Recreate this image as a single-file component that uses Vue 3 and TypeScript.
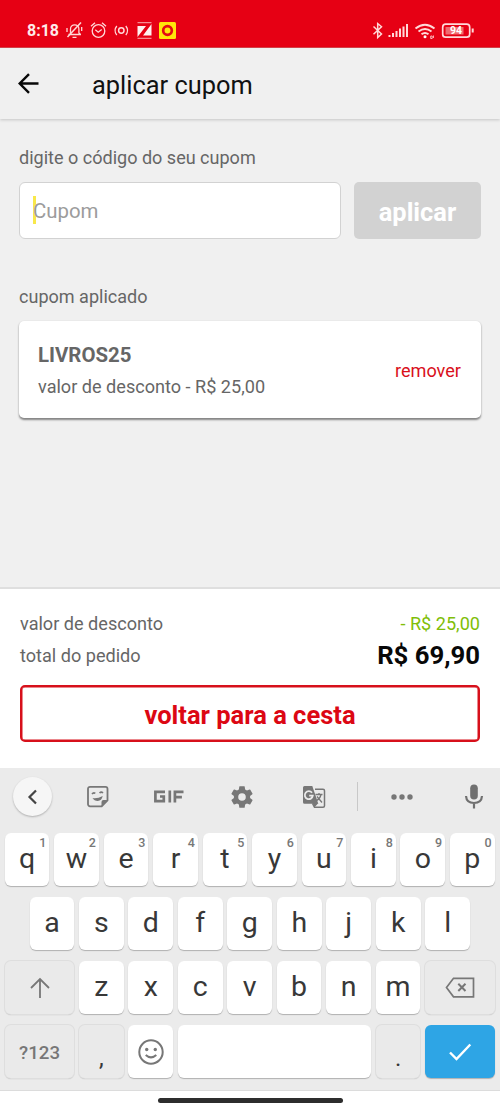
<script setup lang="ts">
interface LetterKey {
  label: string
  hint?: string
}

const topRow: LetterKey[] = 'qwertyuiop'.split('').map((label, i) => ({
  label,
  hint: String((i + 1) % 10),
}))
const middleRow: string[] = 'asdfghjkl'.split('')
const bottomRow: string[] = 'zxcvbnm'.split('')
</script>

<template>
  <div class="screen">
    <div class="status">
      <span class="clock">8:18</span>
      <svg class="status-left" width="120" height="20" viewBox="0 0 120 20" fill="none" stroke="#ffd9d9" stroke-width="1.3">
        <path d="M4.500 14.500h12.500M6.500 14V9a4.200 4.200 0 0 1 8.400 0v4l1.800 1.500M8.500 17.300h4M3 8v4M17.700 7v4" />
        <path d="M3.500 17 17 2.500" stroke-width="1.500" />
        <circle cx="34.500" cy="11" r="6.300" />
        <path d="M31.300 9.800l2.900 2.400 3.500-2.700M27 6.200l4-3.500M38 2.700l4 3.500" />
        <circle cx="57.300" cy="10.500" r="2.700" stroke-width="1.500" />
        <path d="M52.800 6q-3.500 4.500 0 9M61.800 6q3.500 4.500 0 9" />
        <path d="M73.500 2.700h14M73.500 18.300h14" stroke-width=".8" />
        <path d="M73.500 6h8.500l-8.500 11zM87.500 4v11.500H79z" fill="#fff0f0" stroke="none" />
        <rect x="95" y="2" width="17" height="17" rx="1.500" fill="#ffe60a" stroke="none" />
        <circle cx="103.500" cy="10.500" r="4.300" stroke="#e30b13" stroke-width="2.700" />
      </svg>
      <svg class="status-right" width="104" height="20" viewBox="0 0 104 20" fill="none" stroke="#ffd9d9" stroke-width="1.500">
        <path d="M2.500 6.500l8 7.500-3.800 3.500V3.500l3.800 3.200-8 7.500" />
        <path d="M18.500 17v-2M22 17v-4M25.500 17V11M29 17V8.500M32.500 17V6.500M36 17V4" stroke-width="2" />
        <path d="M44.500 8.500q9.500-7.500 19 0M47.500 11.500q6.500-5 13 0M50.500 14.300q3.500-2.700 7 0" stroke-width="1.900" />
        <circle cx="54" cy="16.700" r="1.500" fill="#fff" stroke="none" />
        <path d="M59.700 16h1.500v2.500h-1.500zM62.500 15.500v2.500" stroke-width=".8" />
        <rect x="71.700" y="4.200" width="27" height="13" rx="3" stroke-width="1.700" />
        <rect x="74.500" y="7" width="18" height="7.500" fill="#f06a70" stroke="none" />
        <path d="M101.700 8.500v4" stroke-width="2" />
        <text x="85" y="14.300" text-anchor="middle" class="battery">94</text>
      </svg>
    </div>

    <header class="appbar">
      <svg width="24" height="24" viewBox="0 0 24 24" fill="none" stroke="#080808" stroke-width="2.400">
        <path d="M22.500 11.500H4M13 2.200 3.700 11.500l9.300 9.300" />
      </svg>
      <h1>aplicar cupom</h1>
    </header>

    <main>
      <p class="label">digite o código do seu cupom</p>
      <div class="form">
        <div class="field"><span class="caret"></span><span class="placeholder">Cupom</span></div>
        <button class="apply">aplicar</button>
      </div>
      <p class="label applied">cupom aplicado</p>
      <section class="coupon">
        <div>
          <strong>LIVROS25</strong>
          <p>valor de desconto - R$ 25,00</p>
        </div>
        <a>remover</a>
      </section>
    </main>

    <section class="summary">
      <div class="line"><span>valor de desconto</span><span class="discount">- R$ 25,00</span></div>
      <div class="line"><span>total do pedido</span><span class="total">R$ 69,90</span></div>
      <button class="back">voltar para a cesta</button>
    </section>

    <section class="keyboard">
      <div class="tools">
        <div class="tool t-back">
          <span class="round">
            <svg width="20" height="20" viewBox="0 0 20 20" fill="none" stroke="#444" stroke-width="2.200"><path d="m13 3.500-6.500 6.500 6.500 6.500" /></svg>
          </span>
        </div>
        <div class="tool t-sticker">
          <svg width="24" height="24" viewBox="0 0 24 24" fill="none" stroke="#777" stroke-width="1.800">
            <path d="M4 1.800h15.500a2 2 0 0 1 2 2V15.500l-5.800 5.800H4a2 2 0 0 1-2-2V3.800a2 2 0 0 1 2-2z" />
            <path d="M21.500 15h-4a2 2 0 0 0-2 2v4.300z" fill="#777" stroke="none" />
            <path d="M6 9q1.500-2 3.300-.7M13.500 8q1.800-1.700 3.500 0" stroke-width="1.600" />
            <path d="M6.500 13q5 .8 10.200-2-1 4.800-5 5-3.500 0-5.200-3z" fill="#777" stroke="none" />
          </svg>
        </div>
        <div class="tool t-gif">
          <svg width="30" height="14" viewBox="0 0 30 14" fill="none" stroke="#777" stroke-width="2.700">
            <path d="M11 1.900H1.400v9.200h8.400V6.500H6M15.800.5v12M20.900 12.500V1.900h8.600M20.900 7.200h7" />
          </svg>
        </div>
        <div class="tool t-gear">
          <svg width="26" height="26" viewBox="0 0 24 24" fill="#777">
            <path d="M19.430 12.980c.04-.32.07-.64.07-.98s-.03-.66-.07-.98l2.110-1.650a.5.5 0 0 0 .12-.64l-2-3.460a.5.5 0 0 0-.61-.22l-2.490 1a7.300 7.300 0 0 0-1.690-.98l-.38-2.650A.49.490 0 0 0 14 2h-4a.49.490 0 0 0-.49.420l-.38 2.650c-.61.25-1.170.59-1.690.98l-2.490-1a.49.490 0 0 0-.61.220l-2 3.460a.5.5 0 0 0 .12.640l2.110 1.650a7.900 7.900 0 0 0 0 1.960l-2.110 1.650a.5.5 0 0 0-.12.640l2 3.460c.12.220.39.300.61.220l2.490-1c.52.400 1.080.73 1.690.98l.38 2.650c.03.240.24.420.49.420h4c.25 0 .46-.18.49-.42l.38-2.650c.61-.25 1.170-.59 1.690-.98l2.490 1c.23.090.49 0 .61-.22l2-3.460a.5.5 0 0 0-.12-.64zM12 15.500a3.500 3.500 0 1 1 0-7 3.500 3.500 0 0 1 0 7z" />
          </svg>
        </div>
        <div class="tool t-translate">
          <svg width="24" height="24" viewBox="0 0 24 24" fill="none" stroke="#777" stroke-width="1.500">
            <path d="M13 4.300h8a1.500 1.500 0 0 1 1.500 1.500v15a1.500 1.500 0 0 1-1.500 1.500h-8.500l-2-4" />
            <path d="M2.500 1h7.800l6 17.700H2.500A1.500 1.500 0 0 1 1 17.200V2.500A1.500 1.500 0 0 1 2.500 1zM11 18.500h5l-3.700 4z" fill="#777" stroke="none" />
            <path d="M10 7.700a4 4 0 1 0 .8 3H7.200" stroke="#ebebeb" stroke-width="1.800" />
            <path d="M13.500 9.500h7M17 8v1.500M19 9.500q-.8 4-5 6.500M15 11.500l5 6" stroke-width="1.300" />
          </svg>
        </div>
        <i class="divider"></i>
        <div class="tool t-more">
          <svg width="22" height="6" viewBox="0 0 22 6" fill="#777"><circle cx="3" cy="3" r="2.700" /><circle cx="11" cy="3" r="2.700" /><circle cx="19" cy="3" r="2.700" /></svg>
        </div>
        <div class="tool t-mic">
          <svg width="20" height="26" viewBox="0 0 20 26" fill="none" stroke="#707070" stroke-width="2.200">
            <rect x="6.200" y=".5" width="7.600" height="15" rx="3.800" fill="#707070" stroke="none" />
            <path d="M2 12q.5 7 8 7t8-7M10 19v5.500" />
          </svg>
        </div>
      </div>

      <div class="row">
        <div v-for="k in topRow" :key="k.label" class="key">{{ k.label }}<sup>{{ k.hint }}</sup></div>
      </div>
      <div class="row inset">
        <div v-for="k in middleRow" :key="k" class="key">{{ k }}</div>
      </div>
      <div class="row">
        <div class="key wide grey">
          <svg width="22" height="22" viewBox="0 0 22 22" fill="none" stroke="#777" stroke-width="1.800"><path d="M11 21V2M2 11l9-9 9 9" /></svg>
        </div>
        <div v-for="k in bottomRow" :key="k" class="key">{{ k }}</div>
        <div class="key wide grey">
          <svg width="30" height="22" viewBox="0 0 30 22" fill="none" stroke="#777" stroke-width="1.700"><path d="M8.500 1.300h20v18.500h-20L1.500 10.500z" /><path d="M13.300 6.800l7.200 7.200M20.500 6.800l-7.200 7.200" stroke-width="2" /></svg>
        </div>
      </div>
      <div class="row">
        <div class="key wide grey symbols">?123</div>
        <div class="key grey punct">,</div>
        <div class="key">
          <svg width="28" height="28" viewBox="0 0 28 28" fill="none" stroke="#777" stroke-width="2">
            <circle cx="14" cy="14" r="11.700" /><path d="M8.700 17q5.300 4.800 10.600 0" />
            <circle cx="9.700" cy="11.500" r="1.700" fill="#777" stroke="none" /><circle cx="18.300" cy="11.500" r="1.700" fill="#777" stroke="none" />
          </svg>
        </div>
        <div class="key space"></div>
        <div class="key grey punct">.</div>
        <div class="key wide enter">
          <svg width="24" height="20" viewBox="0 0 24 20" fill="none" stroke="#fff" stroke-width="2.400"><path d="m2 10.500 6.500 6.500L22.300 2.500" /></svg>
        </div>
      </div>
    </section>
    <div class="nav"><i></i></div>
  </div>
</template>

<style>
body {
  margin: 0;
}
</style>

<style scoped>
* {
  box-sizing: border-box;
}
.screen {
  width: 500px;
  height: 1111px;
  overflow: hidden;
  display: flex;
  flex-direction: column;
  background: #f0f0f0;
  font-family: Roboto, "Liberation Sans", sans-serif;
  color: #666;
}
p, h1 {
  margin: 0;
  font-weight: 400;
}
button {
  font-family: inherit;
  font-weight: 700;
  padding: 0;
}
.status {
  height: 48px;
  flex: none;
  background: #e60014;
  border-bottom: 1px solid #d8434c;
  display: flex;
  padding: 20px 25px 0 27px;
}
.clock {
  width: 37px;
  font-size: 16px;
  font-weight: 700;
  line-height: 22px;
  color: #ffe9e9;
}
.status-left {
  flex: none;
}
.status-right {
  margin-left: auto;
}
.battery {
  font-size: 10.5px;
  font-weight: 700;
  fill: #fff;
  stroke: none;
}
.appbar {
  height: 71px;
  flex: none;
  display: flex;
  align-items: center;
  padding: 0 16px;
  box-shadow: 0 1px 3px rgba(0, 0, 0, 0.18);
}
h1 {
  margin: 2px 0 0 52px;
  font-size: 25.4px;
  color: #111;
}
main {
  flex: 1;
  min-height: 0;
  padding: 28px 19px 0;
}
.label {
  font-size: 18.05px;
  line-height: 21px;
}
.form {
  display: flex;
  gap: 13px;
  margin-top: 14px;
}
.field {
  width: 322px;
  height: 57px;
  border: 1px solid #d2d2d2;
  border-radius: 6px;
  background: #fff;
  display: flex;
  align-items: center;
  padding: 1px 0 0 13px;
}
.caret {
  width: 3px;
  height: 28px;
  margin: -3px -3px 0 0;
  background: #f8e84a;
}
.placeholder {
  position: relative;
  font-size: 20.4px;
  color: #9c9c9c;
}
.apply {
  flex: 1;
  height: 57px;
  border: 0;
  border-radius: 5px;
  background: #d2d2d2;
  color: #fff;
  font-size: 25.4px;
  padding-top: 3px;
}
.applied {
  margin-top: 47px;
}
.coupon {
  height: 97px;
  margin-top: 14px;
  padding: 0 20px 0 19px;
  display: flex;
  justify-content: space-between;
  align-items: center;
  border-radius: 5px;
  background: #fff;
  box-shadow: 0 1.5px 2px rgba(0, 0, 0, 0.45);
  font-size: 18.1px;
}
.coupon strong {
  display: block;
  font-size: 20.4px;
  line-height: 24px;
}
.coupon p {
  line-height: 21px;
  margin-top: 9px;
}
.coupon a {
  color: #d9101b;
  margin-top: 2px;
}
.summary {
  height: 181px;
  flex: none;
  border-top: 2px solid #dfdfdf;
  background: #fff;
  padding: 18px 20px 0;
}
.line {
  display: flex;
  justify-content: space-between;
  align-items: center;
  height: 32px;
  font-size: 18.1px;
}
.discount {
  color: #80be08;
}
.total {
  color: #080808;
  font-size: 25.7px;
  font-weight: 700;
}
.back {
  display: block;
  width: 460px;
  height: 57px;
  margin-top: 14px;
  border: 2px solid #d7101b;
  box-shadow: inset 0 0 0 0.500px #d7101b;
  border-radius: 5px;
  background: #fff;
  color: #dc0713;
  font-size: 25.5px;
  padding-top: 2px;
}
.keyboard {
  height: 323px;
  flex: none;
  background: #ebebeb;
  border-bottom: 1px solid #dcdcdc;
}
.tools {
  height: 65px;
  display: flex;
  align-items: center;
  padding-bottom: 8px;
}
.tool {
  display: flex;
  align-items: center;
  justify-content: center;
}
.tool svg {
  display: block;
}
.t-back, .t-sticker { width: 65px; }
.t-gif { width: 77px; }
.t-gear { width: 70px; }
.t-translate { width: 74px; }
.t-more { width: 78px; }
.t-mic { width: 59px; padding-left: 7px; }
.round {
  width: 39px;
  height: 39px;
  border-radius: 50%;
  background: #f6f6f6;
  box-shadow: 0 1px 2px rgba(0, 0, 0, 0.25);
  display: flex;
  align-items: center;
  justify-content: center;
}
.divider {
  width: 1px;
  height: 29px;
  margin: 0 5px 0 6px;
  background: #c8c8c8;
}
.row {
  display: flex;
  gap: 4.7px;
  padding: 0 5.3px 0 4.7px;
  margin-bottom: 11px;
}
.inset {
  padding: 0 30px 0 29.500px;
}
.key {
  position: relative;
  flex: 1 1 0;
  height: 53px;
  border-radius: 6px;
  background: #fff;
  box-shadow: 0 1px 1px rgba(0, 0, 0, 0.25);
  color: #383838;
  font-size: 28.5px;
  display: flex;
  align-items: center;
  justify-content: center;
  padding-bottom: 3px;
}
.key svg {
  display: block;
  margin-top: 3px;
}
.key sup {
  position: absolute;
  top: 2px;
  right: 3px;
  font-size: 12.500px;
  font-weight: 500;
  line-height: 15px;
  color: #777;
}
.wide {
  flex: none;
  width: 69.700px;
}
.grey {
  background: #eaeaea;
  box-shadow: 0 0 0 1px #dedede, 0 1px 1px rgba(0, 0, 0, 0.3);
}
.symbols {
  font-size: 18.700px;
  font-weight: 500;
  color: #777;
  padding: 2px 0 0;
}
.punct {
  font-size: 24px;
  padding: 12px 0 0;
}
.space {
  flex: none;
  width: 193.600px;
}
.enter {
  background: #2ea5e5;
}
.nav {
  height: 20px;
  flex: none;
  background: #fff;
  display: flex;
  justify-content: center;
  padding-top: 7px;
}
.nav i {
  width: 185px;
  height: 5px;
  border-radius: 3px;
  background: #2d2d2d;
}
</style>
